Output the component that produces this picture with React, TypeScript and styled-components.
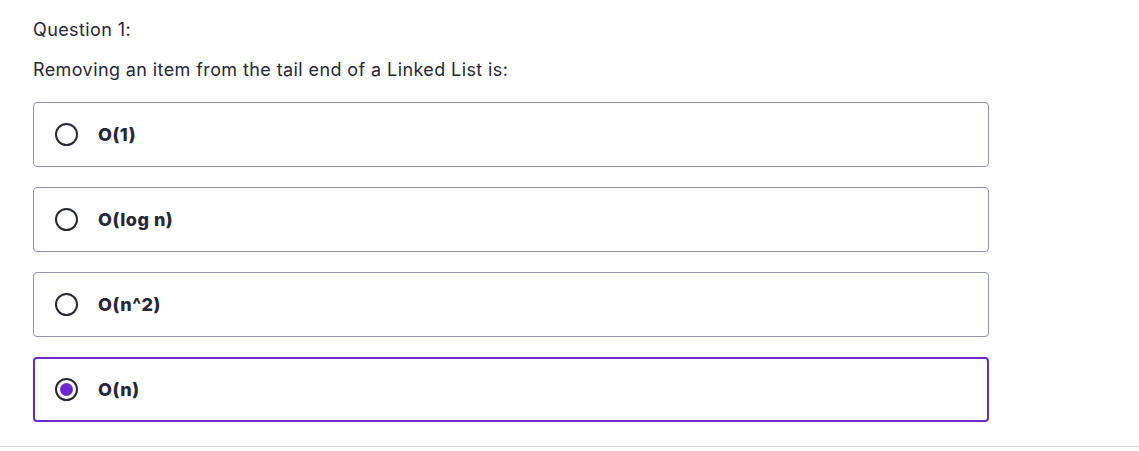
import React, { useState } from "react";
import styled, { createGlobalStyle } from "styled-components";

const Global = createGlobalStyle`
  html, body { margin: 0; padding: 0; background: #ffffff; }
  body { font-family: Inter, "Noto Sans", "Liberation Sans", sans-serif; color: #262739; }
`;

const Page = styled.div`
  display: flex;
  flex-direction: column;
  height: 451px;
  box-sizing: border-box;
`;

const Content = styled.div`
  flex: 1;
  padding: 18px 0 0 33px;
`;

const QuestionNumber = styled.div`
  font-size: 18px;
  line-height: 24px;
  font-weight: 400;
  letter-spacing: 0.4px;
  color: #262739;
`;

const Prompt = styled.div`
  margin-top: 16px;
  font-size: 18px;
  line-height: 24px;
  font-weight: 400;
  letter-spacing: 0.4px;
  color: #262739;
`;

const Options = styled.div`
  margin-top: 20px;
  display: flex;
  flex-direction: column;
  gap: 20px;
  width: 956px;
`;

const Option = styled.label<{ $selected: boolean }>`
  display: flex;
  align-items: center;
  gap: 20px;
  height: 65px;
  box-sizing: border-box;
  padding-left: ${(p) => (p.$selected ? 20 : 21)}px;
  border: ${(p) => (p.$selected ? "2px solid #6d28d2" : "1px solid #9194ac")};
  border-radius: 4px;
  cursor: pointer;
`;

const Radio = styled.span<{ $selected: boolean }>`
  width: 23px;
  height: 23px;
  box-sizing: border-box;
  border: 2px solid #262739;
  border-radius: 50%;
  display: flex;
  align-items: center;
  justify-content: center;
  &::after {
    content: "";
    display: ${(p) => (p.$selected ? "block" : "none")};
    width: 13px;
    height: 13px;
    border-radius: 50%;
    background: #6d28d2;
  }
`;

const Label = styled.span`
  font-size: 18px;
  font-weight: 800;
  letter-spacing: 0.5px;
  color: #262739;
`;

const Footer = styled.div`
  height: 4px;
  border-top: 1px solid #d1d2e0;
`;

const options = ["O(1)", "O(log n)", "O(n^2)", "O(n)"];

export default function App() {
  const [sel, setSel] = useState(3);
  return (
    <Page>
      <Global />
      <Content>
        <QuestionNumber>Question 1:</QuestionNumber>
        <Prompt>Removing an item from the tail end of a Linked List is:</Prompt>
        <Options>
          {options.map((o, i) => (
            <Option key={o} $selected={sel === i} onClick={() => setSel(i)}>
              <Radio $selected={sel === i} />
              <Label>{o}</Label>
            </Option>
          ))}
        </Options>
      </Content>
      <Footer />
    </Page>
  );
}
